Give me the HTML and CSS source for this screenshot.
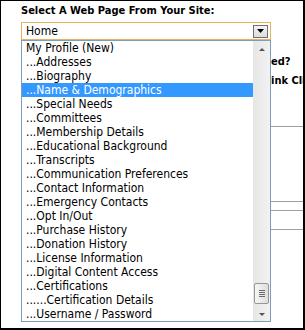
FILE: index.html
```html
<!DOCTYPE html>
<html lang="en">

<head>
    <meta charset="UTF-8">
    <title>Select A Web Page</title>
    <link rel="stylesheet" href="styles.css">
</head>

<body>
    <div class="frame">
        <!-- page picker -->
        <div class="picker">
            <div class="picker-label">Select A Web Page From Your Site:</div>
            <div class="select">
                <span class="select-value">Home</span>
                <span class="select-btn">
                    <svg width="7" height="4" viewBox="0 0 7 4"><path d="M0 0h7L3.5 4z" fill="#000"/></svg>
                </span>
            </div>

            <!-- open list -->
            <div class="dropdown">
                <ul class="options">
                    <li>My Profile (New)</li>
                    <li>...Addresses</li>
                    <li>...Biography</li>
                    <li class="selected">...Name &amp; Demographics</li>
                    <li>...Special Needs</li>
                    <li>...Committees</li>
                    <li>...Membership Details</li>
                    <li>...Educational Background</li>
                    <li>...Transcripts</li>
                    <li>...Communication Preferences</li>
                    <li>...Contact Information</li>
                    <li>...Emergency Contacts</li>
                    <li>...Opt In/Out</li>
                    <li>...Purchase History</li>
                    <li>...Donation History</li>
                    <li>...License Information</li>
                    <li>...Digital Content Access</li>
                    <li>...Certifications</li>
                    <li>......Certification Details</li>
                    <li>...Username / Password</li>
                </ul>
                <div class="scrollbar">
                    <span class="arrow-up"></span>
                    <span class="thumb"><i></i><i></i><i></i><i></i></span>
                    <span class="arrow-down"></span>
                </div>
            </div>
        </div>

        <!-- page content under the list -->
        <div class="content">
            <div class="line"><span class="lead">What Is Need</span>ed?</div>
            <div class="line"><span class="lead">Add Your Page L</span>ink Cli</div>
            <div class="rule rule-1"></div>
            <div class="rule rule-2"></div>
            <div class="rule rule-3"></div>
            <div class="rule rule-4"></div>
        </div>
    </div>
</body>

</html>
```

FILE: styles.css
```css
body {
    margin: 0;
    font-family: "DejaVu Sans Condensed", "DejaVu Sans", sans-serif;
    color: #000;
}

/* outer frame */
.frame {
    position: relative;
    width: 305px;
    height: 330px;
    box-sizing: border-box;
    border-top: 1px solid #000;
    border-left: 1px solid #000;
    border-right: 2px solid #000;
    border-bottom: 2px solid #000;
    background: #fff;
    overflow: hidden;
}

/* picker */
.picker {
    position: relative;
    padding: 3px 0 0 20px;
    z-index: 2;
}

.picker-label {
    font-weight: bold;
    font-size: 11px;
    line-height: 14px;
    height: 18px;
}

.select {
    width: 250px;
    height: 18px;
    box-sizing: border-box;
    border: 1px solid #e3b560;
    display: flex;
    align-items: center;
    justify-content: space-between;
    padding: 0 2px 0 4px;
    font-size: 12px;
}

.select-btn {
    width: 15px;
    height: 13px;
    box-sizing: border-box;
    border: 1px solid #6f6f6f;
    background: linear-gradient(#f4f4f4, #dcdcdc);
    display: flex;
    align-items: center;
    justify-content: center;
}

/* dropdown list */
.dropdown {
    position: absolute;
    left: 20px;
    top: 39px;
    width: 250px;
    height: 282px;
    box-sizing: border-box;
    border: 1px solid #7f9db9;
    background: #fff;
    display: flex;
}

.options {
    flex: 1;
    list-style: none;
    margin: 0;
    padding: 0;
    font-size: 12px;
    line-height: 14px;
    white-space: nowrap;
    overflow: hidden;
}

.options li {
    padding-left: 4px;
}

.options .selected {
    background: #3399ff;
    color: #fff;
}

.scrollbar {
    width: 17px;
    background: linear-gradient(to right, #e6e6e6, #f2f2f2);
    display: flex;
    flex-direction: column;
    align-items: center;
}

.arrow-up {
    margin-top: 7px;
    border: 3px solid transparent;
    border-top: 0;
    border-bottom: 3px solid #555;
}

.thumb {
    margin-top: auto;
    width: 15px;
    height: 21px;
    box-sizing: border-box;
    border: 1px solid #979797;
    border-radius: 2px;
    background: linear-gradient(to right, #f6f6f6, #dedede);
    display: flex;
    flex-direction: column;
    align-items: center;
    justify-content: center;
    gap: 1px;
}

.thumb i {
    width: 6px;
    height: 1px;
    background: #6a6a6a;
}

.arrow-down {
    margin: 9px 0 5px;
    border: 3px solid transparent;
    border-bottom: 0;
    border-top: 3px solid #555;
}

/* content behind */
.content {
    padding: 12px 0 0 20px;
    font-size: 11px;
    font-weight: bold;
    line-height: 19px;
    white-space: nowrap;
}

.lead {
    display: inline-block;
    width: 250px;
    overflow: hidden;
    vertical-align: top;
    text-align: right;
}

.rule {
    border-top: 1px solid #a0a0a0;
}

.rule-1 {
    margin-top: 36px;
}

.rule-2 {
    margin-top: 74px;
}

.rule-3 {
    margin-top: 8px;
}

.rule-4 {
    margin-top: 18px;
}
```
